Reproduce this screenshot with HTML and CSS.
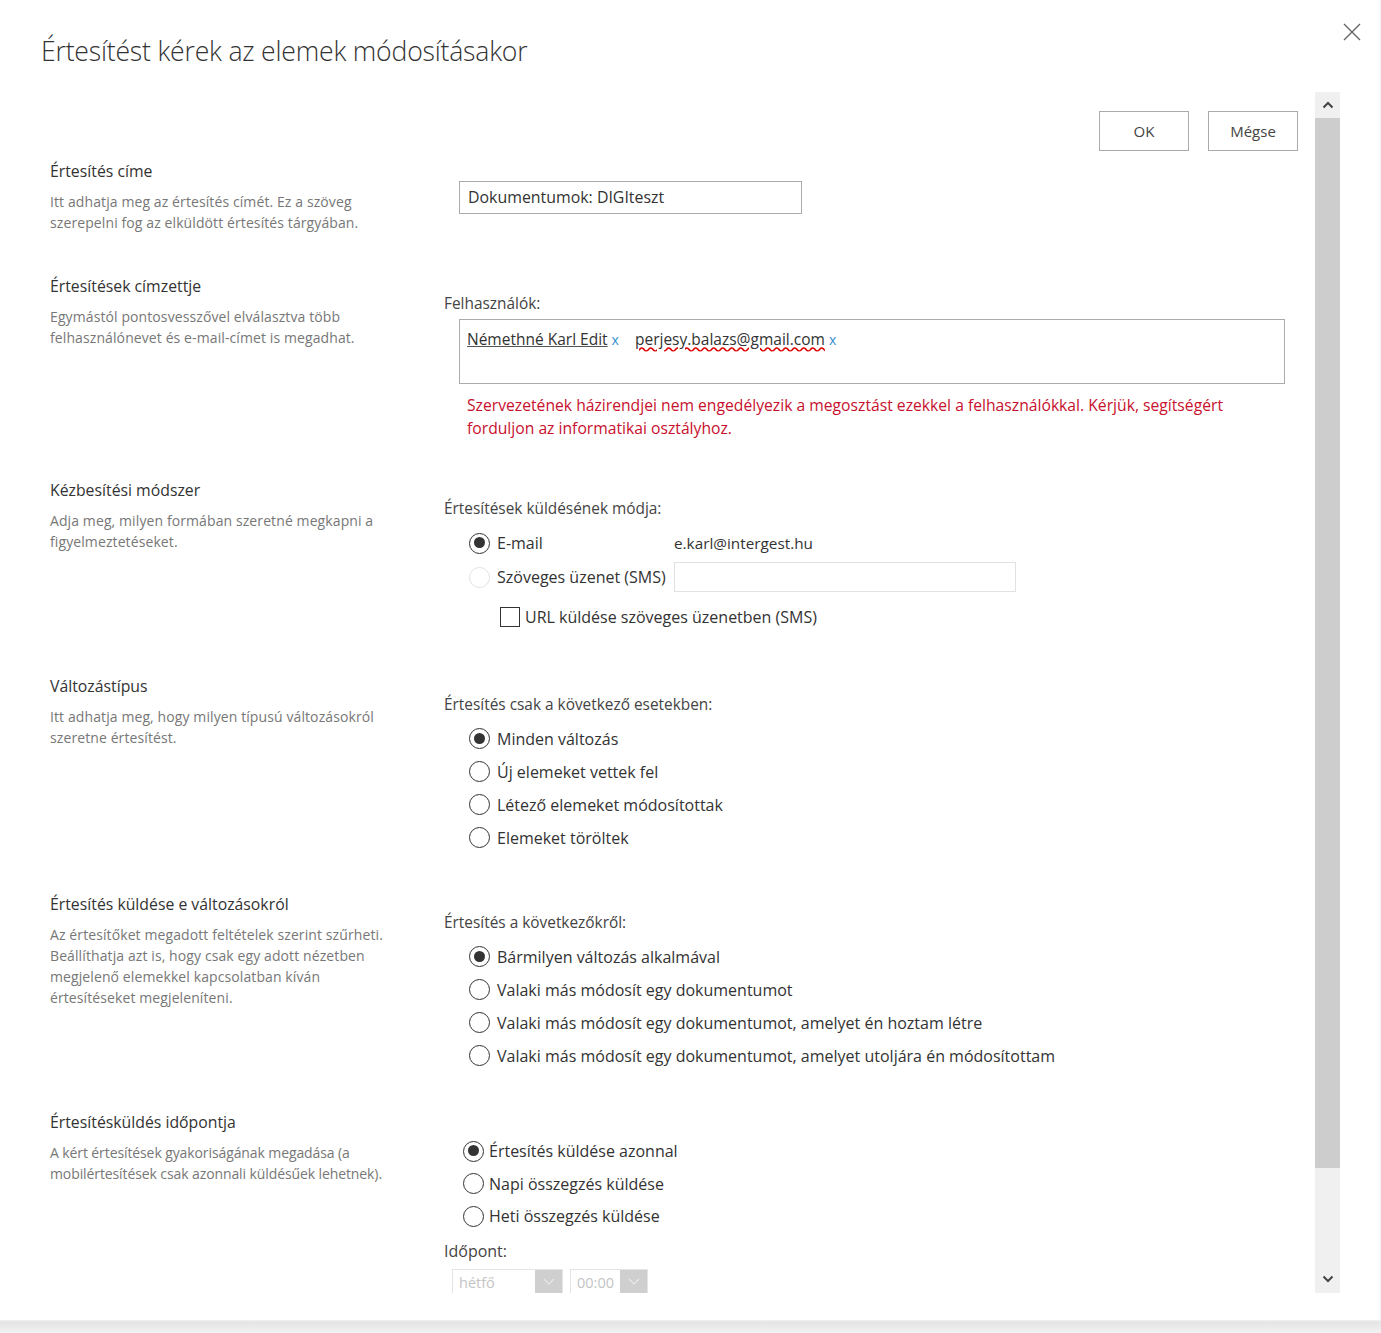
FILE: index.html
```html
<!DOCTYPE html>
<html lang="hu">
<head>
<meta charset="utf-8">
<title>Értesítést kérek az elemek módosításakor</title>
<link rel="stylesheet" href="styles.css">
</head>
<body>
<div class="dialog">
  <header class="dlg-head">
    <h1 class="dlg-title">Értesítést kérek az elemek módosításakor</h1>
    <button class="close" aria-label="Bezárás">
      <svg width="18" height="18" viewBox="0 0 18 18"><path d="M1 1L17 17M17 1L1 17" stroke="#666" stroke-width="1.4" fill="none"/></svg>
    </button>
  </header>
  <div class="dlg-body">
    <div class="content">
      <div class="btn-row">
        <button class="btn">OK</button>
        <button class="btn">Mégse</button>
      </div>

      <section class="section s1">
        <div class="left">
          <h3 class="sec-title">Értesítés címe</h3>
          <p class="sec-desc">Itt adhatja meg az értesítés címét. Ez a szöveg szerepelni fog az elküldött értesítés tárgyában.</p>
        </div>
        <div class="right r1">
          <div class="textbox">Dokumentumok: DIGIteszt</div>
        </div>
      </section>

      <section class="section s2">
        <div class="left">
          <h3 class="sec-title">Értesítések címzettje</h3>
          <p class="sec-desc">Egymástól pontosvesszővel elválasztva több felhasználónevet és e-mail-címet is megadhat.</p>
        </div>
        <div class="right r2">
          <div class="field-label">Felhasználók:</div>
          <div class="people">
            <span class="person">Némethné Karl Edit</span><span class="rm">x</span>
            <span class="person bad">perjesy.balazs@gmail.com</span><span class="rm">x</span>
          </div>
          <p class="error">Szervezetének házirendjei nem engedélyezik a megosztást ezekkel a felhasználókkal. Kérjük, segítségért forduljon az informatikai osztályhoz.</p>
        </div>
      </section>

      <section class="section s3">
        <div class="left">
          <h3 class="sec-title">Kézbesítési módszer</h3>
          <p class="sec-desc">Adja meg, milyen formában szeretné megkapni a figyelmeztetéseket.</p>
        </div>
        <div class="right r3">
          <div class="field-label">Értesítések küldésének módja:</div>
          <div class="method">
            <div class="opt"><span class="radio on"></span><span>E-mail</span></div>
            <div class="mval">e.karl@intergest.hu</div>
            <div class="opt"><span class="radio dis"></span><span>Szöveges üzenet (SMS)</span></div>
            <div class="smsbox"></div>
          </div>
          <div class="chk-row"><span class="checkbox"></span><span>URL küldése szöveges üzenetben (SMS)</span></div>
        </div>
      </section>

      <section class="section s4">
        <div class="left">
          <h3 class="sec-title">Változástípus</h3>
          <p class="sec-desc">Itt adhatja meg, hogy milyen típusú változásokról szeretne értesítést.</p>
        </div>
        <div class="right r4">
          <div class="field-label">Értesítés csak a következő esetekben:</div>
          <div class="radios">
            <div class="opt"><span class="radio on"></span><span>Minden változás</span></div>
            <div class="opt"><span class="radio"></span><span>Új elemeket vettek fel</span></div>
            <div class="opt"><span class="radio"></span><span>Létező elemeket módosítottak</span></div>
            <div class="opt"><span class="radio"></span><span>Elemeket töröltek</span></div>
          </div>
        </div>
      </section>

      <section class="section s5">
        <div class="left">
          <h3 class="sec-title">Értesítés küldése e változásokról</h3>
          <p class="sec-desc">Az értesítőket megadott feltételek szerint szűrheti. Beállíthatja azt is, hogy csak egy adott nézetben megjelenő elemekkel kapcsolatban kíván értesítéseket megjeleníteni.</p>
        </div>
        <div class="right r5">
          <div class="field-label">Értesítés a következőkről:</div>
          <div class="radios">
            <div class="opt"><span class="radio on"></span><span>Bármilyen változás alkalmával</span></div>
            <div class="opt"><span class="radio"></span><span>Valaki más módosít egy dokumentumot</span></div>
            <div class="opt"><span class="radio"></span><span>Valaki más módosít egy dokumentumot, amelyet én hoztam létre</span></div>
            <div class="opt"><span class="radio"></span><span>Valaki más módosít egy dokumentumot, amelyet utoljára én módosítottam</span></div>
          </div>
        </div>
      </section>

      <section class="section s6">
        <div class="left">
          <h3 class="sec-title">Értesítésküldés időpontja</h3>
          <p class="sec-desc narrow">A kért értesítések gyakoriságának megadása (a mobilértesítések csak azonnali küldésűek lehetnek).</p>
        </div>
        <div class="right r6">
          <div class="radios tight">
            <div class="opt"><span class="radio on"></span><span>Értesítés küldése azonnal</span></div>
            <div class="opt"><span class="radio"></span><span>Napi összegzés küldése</span></div>
            <div class="opt"><span class="radio"></span><span>Heti összegzés küldése</span></div>
          </div>
          <div class="field-label time-label">Időpont:</div>
          <div class="selects">
            <div class="sel sel-day"><span class="sel-val">hétfő</span><span class="sel-arrow"><svg width="12" height="8" viewBox="0 0 12 8"><path d="M1 1L6 6L11 1" stroke="#e8e8e8" stroke-width="1.2" fill="none"/></svg></span></div>
            <div class="sel sel-time"><span class="sel-val">00:00</span><span class="sel-arrow"><svg width="12" height="8" viewBox="0 0 12 8"><path d="M1 1L6 6L11 1" stroke="#e8e8e8" stroke-width="1.2" fill="none"/></svg></span></div>
          </div>
        </div>
      </section>
    </div>
    <div class="scrollbar">
      <div class="sb-btn"><svg width="12" height="8" viewBox="0 0 12 8"><path d="M1.5 6.5L6 2L10.5 6.5" stroke="#444" stroke-width="2" fill="none"/></svg></div>
      <div class="sb-thumb"></div>
      <div class="sb-track"></div>
      <div class="sb-btn sb-down"><svg width="12" height="8" viewBox="0 0 12 8"><path d="M1.5 1.5L6 6L10.5 1.5" stroke="#444" stroke-width="2" fill="none"/></svg></div>
    </div>
  </div>
</div>
</body>
</html>
```
FILE: styles.css
```css
* { box-sizing: border-box; }
html, body { margin: 0; padding: 0; }
body {
  background: linear-gradient(#ffffff 0, #ffffff 1318px, #e4e4e4 1322px, #f2f2f2 1333px);
  font-family: "Open Sans", "Noto Sans", sans-serif;
  color: #333;
  width: 1381px;
  height: 1333px;
  overflow: hidden;
}
.dialog {
  width: 1381px;
  height: 1320px;
  background: #fff;
  border-right: 1px solid #f3f3f3;
  position: relative;
}
.dlg-head {
  height: 92px;
  padding: 33px 0 0 41px;
}
.dlg-title {
  margin: 0;
  font-weight: 300;
  font-size: 26.6px;
  line-height: 36px;
  color: #333;
  letter-spacing: -0.2px;
}
.close {
  position: absolute;
  top: 23px;
  right: 18px;
  width: 20px;
  height: 20px;
  padding: 0;
  border: 0;
  background: none;
}
.dlg-body {
  display: flex;
  height: 1201px;
  width: 1340px;
}
.content {
  flex: 1;
  overflow: hidden;
}
.scrollbar {
  width: 25px;
  display: flex;
  flex-direction: column;
  background: #f0f0f0;
}
.sb-btn {
  height: 26px;
  display: flex;
  align-items: center;
  justify-content: center;
  background: #f0f0f0;
}
.sb-thumb {
  height: 1050px;
  background: #cdcdcd;
}
.sb-track { flex: 1; }
.sb-down { height: 28px; }

.btn-row {
  display: flex;
  justify-content: flex-end;
  gap: 19px;
  padding: 19px 17px 0 0;
}
.btn {
  width: 90px;
  height: 40px;
  border: 1px solid #ababab;
  background: #fff;
  font-family: "Open Sans", sans-serif;
  font-size: 15px;
  color: #444;
  padding: 0;
}

.section {
  display: grid;
  grid-template-columns: 394px 1fr;
  padding-left: 50px;
}
.sec-title {
  margin: 0;
  font-size: 15.8px;
  font-weight: 400;
  line-height: 20px;
  color: #333;
}
.sec-desc {
  margin: 10px 0 0;
  font-size: 14px;
  line-height: 21px;
  color: #777;
  width: 340px;
  letter-spacing: 0.1px;
}
.sec-desc.narrow { letter-spacing: -0.1px; }

.s1 { margin-top: 10px; }
.s2 { margin-top: 43px; }
.s3 { margin-top: 40px; }
.s4 { margin-top: 44px; }
.s5 { margin-top: 40px; }
.s6 { margin-top: 40px; }

.field-label {
  font-size: 15.4px;
  line-height: 20px;
  color: #444;
}
.right { font-size: 16px; color: #333; }
.r1 { padding-top: 20px; padding-left: 15px; }
.textbox {
  width: 343px;
  height: 33px;
  border: 1px solid #ababab;
  padding: 0 8px;
  font-size: 15.9px;
  line-height: 31px;
  color: #333;
}
.r2 { padding-top: 18px; }
.people {
  margin: 5px 0 0 15px;
  width: 826px;
  height: 65px;
  border: 1px solid #ababab;
  padding: 9px 7px;
  font-size: 15.5px;
  line-height: 20px;
}
.person {
  color: #333;
  text-decoration: underline;
  text-decoration-color: #555;
}
.person.bad {
  margin-left: 12px;
  text-decoration: underline wavy #d00;
}
.rm { color: #3a8fd0; margin-left: 4px; font-size: 14px; }
.error {
  margin: 10px 0 0 23px;
  color: #c8102e;
  font-size: 15.7px;
  line-height: 23px;
  width: 800px;
}

.opt {
  display: flex;
  align-items: center;
  gap: 7px;
  height: 33px;
  white-space: nowrap;
}
.radio {
  width: 21px;
  height: 21px;
  border: 1.5px solid #333;
  border-radius: 50%;
  position: relative;
  flex: none;
  background: #fff;
}
.radio.on::after {
  content: "";
  position: absolute;
  left: 3.5px;
  top: 3.5px;
  width: 11px;
  height: 11px;
  border-radius: 50%;
  background: #333;
}
.radio.dis { border-color: #e2e2e2; }

.r3 { padding-top: 19px; }
.method {
  display: grid;
  grid-template-columns: 205px 1fr;
  grid-template-rows: 30px 30px;
  row-gap: 4px;
  margin: 9px 0 0 25px;
}
.method .opt { height: 30px; }
.mval { font-size: 15.3px; line-height: 30px; }
.smsbox {
  width: 342px;
  height: 30px;
  border: 1px solid #e2e2e2;
}
.chk-row {
  display: flex;
  align-items: center;
  gap: 5px;
  height: 30px;
  margin: 10px 0 0 56px;
}
.checkbox {
  width: 20px;
  height: 20px;
  border: 1.5px solid #333;
  flex: none;
}

.r4, .r5 { padding-top: 19px; }
.radios {
  margin: 7px 0 0 25px;
}
.r6 { padding-top: 23px; }
.radios.tight { margin: 0 0 0 19px; }
.radios.tight .opt { gap: 5px; height: 32.5px; }
.time-label { margin-top: 8px; font-size: 16px; }
.selects {
  display: flex;
  gap: 7px;
  margin: 8px 0 0 8px;
}
.sel {
  display: flex;
  height: 26px;
  border: 1px solid #e4e4e4;
  border-bottom: 0;
}
.sel-day { width: 111px; }
.sel-time { width: 78px; }
.sel-val {
  flex: 1;
  padding-left: 6px;
  color: #c4c4c4;
  font-size: 14.5px;
  line-height: 26px;
}
.sel-arrow {
  width: 27px;
  background: #cfcfcf;
  display: flex;
  align-items: center;
  justify-content: center;
}
```
